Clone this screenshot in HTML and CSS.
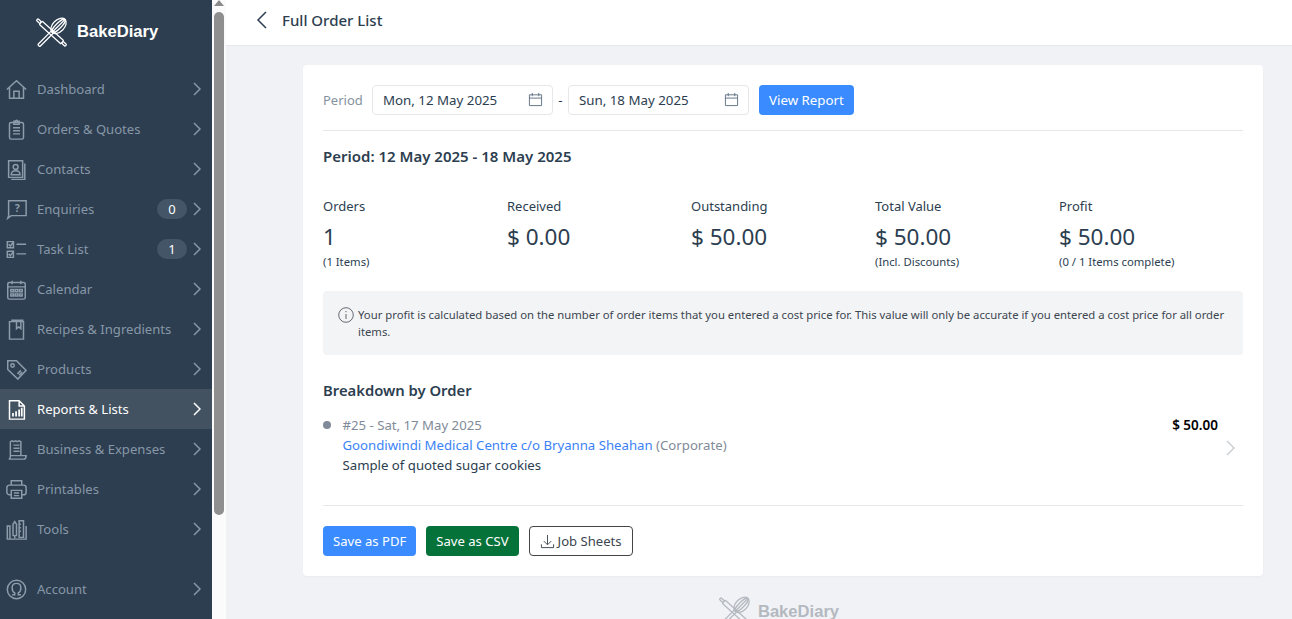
FILE: index.html
```html
<!DOCTYPE html>
<html lang="en">
<head>
<meta charset="utf-8">
<title>BakeDiary - Full Order List</title>
<link rel="stylesheet" href="styles.css">
</head>
<body>
<div class="app">
  <aside class="sidebar">
    <div class="brand">
      <svg class="brand-icon" viewBox="0 0 32 32">
        <g transform="rotate(42 16 16)">
          <rect x="-4" y="14.800" width="5" height="2.400" rx="1"/>
          <rect x="1" y="13.800" width="30" height="4.400" rx="1"/>
          <rect x="31" y="14.800" width="5" height="2.400" rx="1"/>
        </g>
        <g transform="rotate(-45 16 16)">
          <rect x="-3" y="14.800" width="20" height="3" rx="1"/>
          <ellipse cx="26" cy="16.300" rx="9.500" ry="6"/>
          <ellipse cx="26" cy="16.300" rx="9.500" ry="2.800"/>
          <path d="M17 16.300h18"/>
        </g>
      </svg>
      <span class="brand-name">BakeDiary</span>
    </div>
    <nav class="nav">
      <a class="nav-item"><svg class="nav-icon" viewBox="0 0 24 24"><path d="M1 12L12 2l11 10M4 9.500V22h16V9.500M9 22v-8h6v8"/></svg><span class="nav-label">Dashboard</span><svg class="chev" viewBox="0 0 8 14"><path d="M1 1l6 6-6 6"/></svg></a>
      <a class="nav-item"><svg class="nav-icon" viewBox="0 0 24 24"><rect x="4" y="4" width="16" height="19" rx="2"/><path d="M9 4V2.500h2a1 1 0 0 1 2 0h2V6H9zM8 10h8M8 13.500h8M8 17h8"/></svg><span class="nav-label">Orders &amp; Quotes</span><svg class="chev" viewBox="0 0 8 14"><path d="M1 1l6 6-6 6"/></svg></a>
      <a class="nav-item"><svg class="nav-icon" viewBox="0 0 24 24"><path d="M3 2h16v19H3zM21.500 5v18.500H6"/><circle cx="11" cy="9" r="2.800"/><path d="M6 18c0-6 10-6 10 0z"/></svg><span class="nav-label">Contacts</span><svg class="chev" viewBox="0 0 8 14"><path d="M1 1l6 6-6 6"/></svg></a>
      <a class="nav-item"><svg class="nav-icon" viewBox="0 0 24 24"><path d="M3 2h20v17H6l-4 3 1-3z"/><text x="13" y="15" class="qmark">?</text></svg><span class="nav-label">Enquiries</span><span class="badge">0</span><svg class="chev" viewBox="0 0 8 14"><path d="M1 1l6 6-6 6"/></svg></a>
      <a class="nav-item"><svg class="nav-icon" viewBox="0 0 24 24"><path d="M1.500 3h7v7h-7zM1.500 14h7v7h-7zM12 6h11M12 17h11M3 6l2 2 3-4M3 17l2 2 3-4"/></svg><span class="nav-label">Task List</span><span class="badge">1</span><svg class="chev" viewBox="0 0 8 14"><path d="M1 1l6 6-6 6"/></svg></a>
      <a class="nav-item"><svg class="nav-icon" viewBox="0 0 24 24"><rect x="2" y="4" width="20" height="19" rx="2"/><path d="M2 9h20M7 2v4M17 2v4M5.500 12h3v2.500h-3zM10.500 12h3v2.500h-3zM15.500 12h3v2.500h-3zM5.500 17h3v2.500h-3zM10.500 17h3v2.500h-3zM15.500 17h3v2.500h-3z"/></svg><span class="nav-label">Calendar</span><svg class="chev" viewBox="0 0 8 14"><path d="M1 1l6 6-6 6"/></svg></a>
      <a class="nav-item"><svg class="nav-icon" viewBox="0 0 24 24"><path d="M4 3h16v20H4zM12 3v8l2.500-2 2.500 2V3M6 1.500h14"/></svg><span class="nav-label">Recipes &amp; Ingredients</span><svg class="chev" viewBox="0 0 8 14"><path d="M1 1l6 6-6 6"/></svg></a>
      <a class="nav-item"><svg class="nav-icon" viewBox="0 0 24 24"><path d="M2 2h10l11 11-9.500 10L2 12z"/><circle cx="7.500" cy="7.500" r="2"/><path d="M13 17l4-4M15 18.500l3.500-3.500"/></svg><span class="nav-label">Products</span><svg class="chev" viewBox="0 0 8 14"><path d="M1 1l6 6-6 6"/></svg></a>
      <a class="nav-item active"><svg class="nav-icon" viewBox="0 0 24 24"><path d="M4 2h11l6 6v15H4zM15 2v6h6"/><path class="fill" d="M7 16h2v4H7zM10.500 14h2v6h-2zM14 12h2v8h-2zM17 10h2v10h-2z"/></svg><span class="nav-label">Reports &amp; Lists</span><svg class="chev" viewBox="0 0 8 14"><path d="M1 1l6 6-6 6"/></svg></a>
      <a class="nav-item"><svg class="nav-icon" viewBox="0 0 24 24"><path d="M5 19V3l2-1 2 1 2-1 2 1 2-1 2 1v16M5 19c0 4-2 4-2 4h17c2 0 3-2 3-4zM8.500 7h7M8.500 10.500h7M8.500 14h7"/></svg><span class="nav-label">Business &amp; Expenses</span><svg class="chev" viewBox="0 0 8 14"><path d="M1 1l6 6-6 6"/></svg></a>
      <a class="nav-item"><svg class="nav-icon" viewBox="0 0 24 24"><path d="M6 7V2h12v5M6 18H4a3 3 0 0 1-3-3v-5a3 3 0 0 1 3-3h16a3 3 0 0 1 3 3v5a3 3 0 0 1-3 3h-2M6 13h12v9H6zM9 16h6M9 19h6"/></svg><span class="nav-label">Printables</span><svg class="chev" viewBox="0 0 8 14"><path d="M1 1l6 6-6 6"/></svg></a>
      <a class="nav-item"><svg class="nav-icon" viewBox="0 0 24 24"><path d="M1.500 8h3v15h-3zM1.500 23H23V8M8 6l2-3 2 3v13H8zM15 2h5v19h-5zM15 6h2M15 10h2M15 14h2M10 19v3"/></svg><span class="nav-label">Tools</span><svg class="chev" viewBox="0 0 8 14"><path d="M1 1l6 6-6 6"/></svg></a>
      <a class="nav-item nav-account"><svg class="nav-icon" viewBox="0 0 24 24"><circle cx="12" cy="12" r="10.500"/><path d="M7 18h3v-2c-2-1-3-3-3-6 0-3 2-5 5-5s5 2 5 5c0 3-1 5-3 6v2h3"/></svg><span class="nav-label">Account</span><svg class="chev" viewBox="0 0 8 14"><path d="M1 1l6 6-6 6"/></svg></a>
    </nav>
  </aside>
  <div class="scrollbar">
    <div class="scroll-up"></div>
    <div class="scroll-thumb"></div>
  </div>
  <div class="content">
    <header class="topbar">
      <svg class="back" viewBox="0 0 11 18"><path d="M10 1L2 9l8 8"/></svg>
      <h1 class="title">Full Order List</h1>
    </header>
    <main class="main">
      <section class="card">
        <div class="period-row">
          <span class="period-label">Period</span>
          <div class="date-input"><span>Mon, 12 May 2025</span><svg class="cal" viewBox="0 0 16 16"><path d="M1.500 3h13v11.500h-13zM1.500 6.500h13M4.500 1v3.500M11.500 1v3.500"/></svg></div>
          <span class="dash">-</span>
          <div class="date-input"><span>Sun, 18 May 2025</span><svg class="cal" viewBox="0 0 16 16"><path d="M1.500 3h13v11.500h-13zM1.500 6.500h13M4.500 1v3.500M11.500 1v3.500"/></svg></div>
          <button class="btn btn-blue btn-view">View Report</button>
        </div>
        <h2 class="period-title">Period: 12 May 2025 - 18 May 2025</h2>
        <div class="stats">
          <div class="stat"><div class="stat-label">Orders</div><div class="stat-value">1</div><div class="stat-note">(1 Items)</div></div>
          <div class="stat"><div class="stat-label">Received</div><div class="stat-value">$ 0.00</div></div>
          <div class="stat"><div class="stat-label">Outstanding</div><div class="stat-value">$ 50.00</div></div>
          <div class="stat"><div class="stat-label">Total Value</div><div class="stat-value">$ 50.00</div><div class="stat-note">(Incl. Discounts)</div></div>
          <div class="stat"><div class="stat-label">Profit</div><div class="stat-value">$ 50.00</div><div class="stat-note">(0 / 1 Items complete)</div></div>
        </div>
        <div class="notice">
          <svg class="info" viewBox="0 0 16 16"><circle cx="8" cy="8" r="7.300"/><path d="M8 7v5M8 4v1.200"/></svg>
          <p class="notice-text">Your profit is calculated based on the number of order items that you entered a cost price for. This value will only be accurate if you entered a cost price for all order items.</p>
        </div>
        <h3 class="breakdown-title">Breakdown by Order</h3>
        <div class="order">
          <span class="dot"></span>
          <div class="order-body">
            <div class="order-meta">#25 - Sat, 17 May 2025</div>
            <div><a class="order-link">Goondiwindi Medical Centre c/o Bryanna Sheahan</a> <span class="order-meta">(Corporate)</span></div>
            <div class="order-desc">Sample of quoted sugar cookies</div>
          </div>
          <div class="order-side">
            <div class="order-amount">$ 50.00</div>
            <svg class="order-chev" viewBox="0 0 9 16"><path d="M1 1l7 7-7 7"/></svg>
          </div>
        </div>
        <div class="actions">
          <button class="btn btn-blue">Save as PDF</button>
          <button class="btn btn-green">Save as CSV</button>
          <button class="btn btn-outline"><svg class="dl" viewBox="0 0 16 16"><path d="M8 1v10M4 7.500l4 4 4-4M1.500 11v3.500h13V11"/></svg>Job Sheets</button>
        </div>
      </section>
      <footer class="foot">
        <svg class="foot-icon" viewBox="0 0 32 32">
          <g transform="rotate(42 16 16)">
            <rect x="-4" y="14.800" width="5" height="2.400" rx="1"/>
            <rect x="1" y="13.800" width="30" height="4.400" rx="1"/>
            <rect x="31" y="14.800" width="5" height="2.400" rx="1"/>
          </g>
          <g transform="rotate(-45 16 16)">
            <rect x="-3" y="14.800" width="20" height="3" rx="1"/>
            <ellipse cx="26" cy="16.300" rx="9.500" ry="6"/>
            <ellipse cx="26" cy="16.300" rx="9.500" ry="2.800"/>
            <path d="M17 16.300h18"/>
          </g>
        </svg>
        <span class="foot-name">BakeDiary</span>
      </footer>
    </main>
  </div>
</div>
</body>
</html>
```
FILE: styles.css
```css
* { box-sizing: border-box; }
html, body { margin: 0; height: 100%; overflow: hidden; }
body { font-family: "Noto Sans", "Open Sans", sans-serif; font-size: 13.300px; color: #2c3e50; background: #f1f2f6; }
.app { display: flex; height: 619px; overflow: hidden; }

.sidebar { width: 212px; flex: none; background: #2d3e50; }
.brand { height: 69px; padding: 16px 0 0 36px; display: flex; align-items: flex-start; gap: 10px; }
.brand-icon { width: 31px; height: 31px; margin-top: 1px; overflow: visible; fill: none; stroke: #fff; stroke-width: 1.300; }
.brand-name { font-family: "Liberation Sans", sans-serif; font-weight: 700; font-size: 16.600px; line-height: 32px; color: #fff; }
.nav { display: flex; flex-direction: column; }
.nav-item { height: 40px; display: flex; align-items: center; padding: 0 11px 0 6px; color: #8797a7; }
.nav-icon { width: 21px; height: 21px; flex: none; fill: none; stroke: #8d9cab; stroke-width: 1.700; margin-right: 10px; }
.qmark { font: 700 12px "Noto Sans", sans-serif; fill: #8d9cab; stroke: none; text-anchor: middle; }
.nav-label { flex: 1; font-size: 13.100px; }
.badge { width: 30px; height: 20px; border-radius: 10px; background: #435566; color: #fff; font-size: 13px; line-height: 20px; text-align: center; margin-right: 6px; }
.chev { width: 8px; height: 14px; flex: none; fill: none; stroke: #8797a7; stroke-width: 1.500; }
.active { background: #435261; color: #fff; }
.active .nav-icon { stroke: #fff; }
.active .chev { stroke: #fff; }
.fill { fill: #fff; stroke: none; }
.nav-account { margin-top: 20px; }

.scrollbar { width: 14px; flex: none; background: #fbfbfc; display: flex; flex-direction: column; align-items: center; }
.scroll-up { width: 0; height: 0; border-left: 5px solid transparent; border-right: 5px solid transparent; border-bottom: 6px solid #8a8a8a; margin-bottom: 6px; }
.scroll-thumb { width: 10px; height: 503px; background: #8f8f8f; border-radius: 5px; }

.content { flex: 1; min-width: 0; display: flex; flex-direction: column; }
.topbar { height: 46px; flex: none; background: #fff; border-bottom: 1px solid #e5e7eb; display: flex; align-items: center; padding: 0 0 5px 30px; }
.back { width: 11px; height: 18px; fill: none; stroke: #2c3e50; stroke-width: 1.500; margin-right: 15px; }
.title { margin: 0; font-size: 15px; font-weight: 500; color: #2c3e50; }
.main { flex: 1; padding: 19px 29px 0 77px; }

.card { background: #fff; border-radius: 4px; padding: 20px; box-shadow: 0 1px 2px rgba(0,0,0,.03); }
.period-row { display: flex; align-items: center; height: 46px; padding-bottom: 16px; border-bottom: 1px solid #e5e7eb; }
.period-label { color: #8492a0; width: 49px; font-size: 13px; }
.date-input { width: 181px; height: 30px; border: 1px solid #e5e7eb; border-radius: 4px; display: flex; align-items: center; justify-content: space-between; padding: 0 9px 0 10px; color: #2c3e50; }
.cal { width: 15px; height: 15px; fill: none; stroke: #5f7081; stroke-width: 1; }
.dash { width: 15px; text-align: center; color: #2c3e50; }
.btn { font: inherit; height: 30px; border-radius: 4px; border: 1px solid transparent; color: #fff; padding: 0 9px; display: inline-flex; align-items: center; }
.btn-view { margin-left: 10px; }
.btn-blue { background: #3a8bff; }
.btn-green { background: #05723a; }
.btn-outline { background: #fff; border-color: #444; color: #3c4650; padding: 0 10px; }
.period-title { margin: 15px 0 0; font-size: 15px; line-height: 20px; font-weight: 600; color: #2c3e50; }

.stats { display: grid; grid-template-columns: repeat(5, 1fr); margin-top: 30px; height: 78px; }
.stat-label { font-size: 13px; line-height: 20px; color: #2c3e50; }
.stat-value { font-size: 22.500px; line-height: 32px; margin-top: 5px; color: #2c3e50; }
.stat-note { font-size: 11.300px; line-height: 16px; margin-top: 1px; color: #2c3e50; }

.notice { display: flex; background: #f3f4f6; border-radius: 4px; height: 64px; margin-top: 17px; padding: 15px 15px 0; gap: 4px; }
.info { width: 16px; height: 16px; flex: none; fill: none; stroke: #3c4650; stroke-width: .8; margin-top: 1px; }
.notice-text { margin: 0; font-size: 11.300px; line-height: 17px; color: #3c4650; }

.breakdown-title { margin: 25px 0 0; font-size: 14.800px; line-height: 20px; font-weight: 600; color: #2c3e50; }
.order { display: flex; margin-top: 15px; height: 91px; border-bottom: 1px solid #e5e7eb; font-size: 13.200px; line-height: 20px; }
.dot { width: 8px; height: 8px; border-radius: 50%; background: #7f8b99; margin: 6px 11.500px 0 0; flex: none; }
.order-body { flex: 1; }
.order-meta { color: #7f8b99; }
.order-link { color: #3b82f6; }
.order-desc { color: #2c3e50; }
.order-side { width: 80px; display: flex; flex-direction: column; align-items: flex-end; }
.order-amount { font-weight: 600; color: #000; font-size: 13.500px; padding-right: 25px; white-space: nowrap; }
.order-chev { width: 9px; height: 16px; fill: none; stroke: #c8ccd2; stroke-width: 1.400; margin: 5px 8px 0 0; }

.actions { display: flex; gap: 10px; margin-top: 20px; font-size: 13.100px; }
.dl { width: 15px; height: 15px; fill: none; stroke: #3c4650; stroke-width: 1; margin-right: 3px; }

.foot { display: flex; justify-content: center; align-items: center; gap: 8px; margin-top: 20px; padding-right: 8px; }
.foot-icon { width: 31px; height: 31px; overflow: visible; fill: none; stroke: #b4b9c0; stroke-width: 1.300; }
.foot-name { font-family: "Liberation Sans", sans-serif; font-weight: 700; font-size: 16.600px; color: #b4b9c0; }
```
